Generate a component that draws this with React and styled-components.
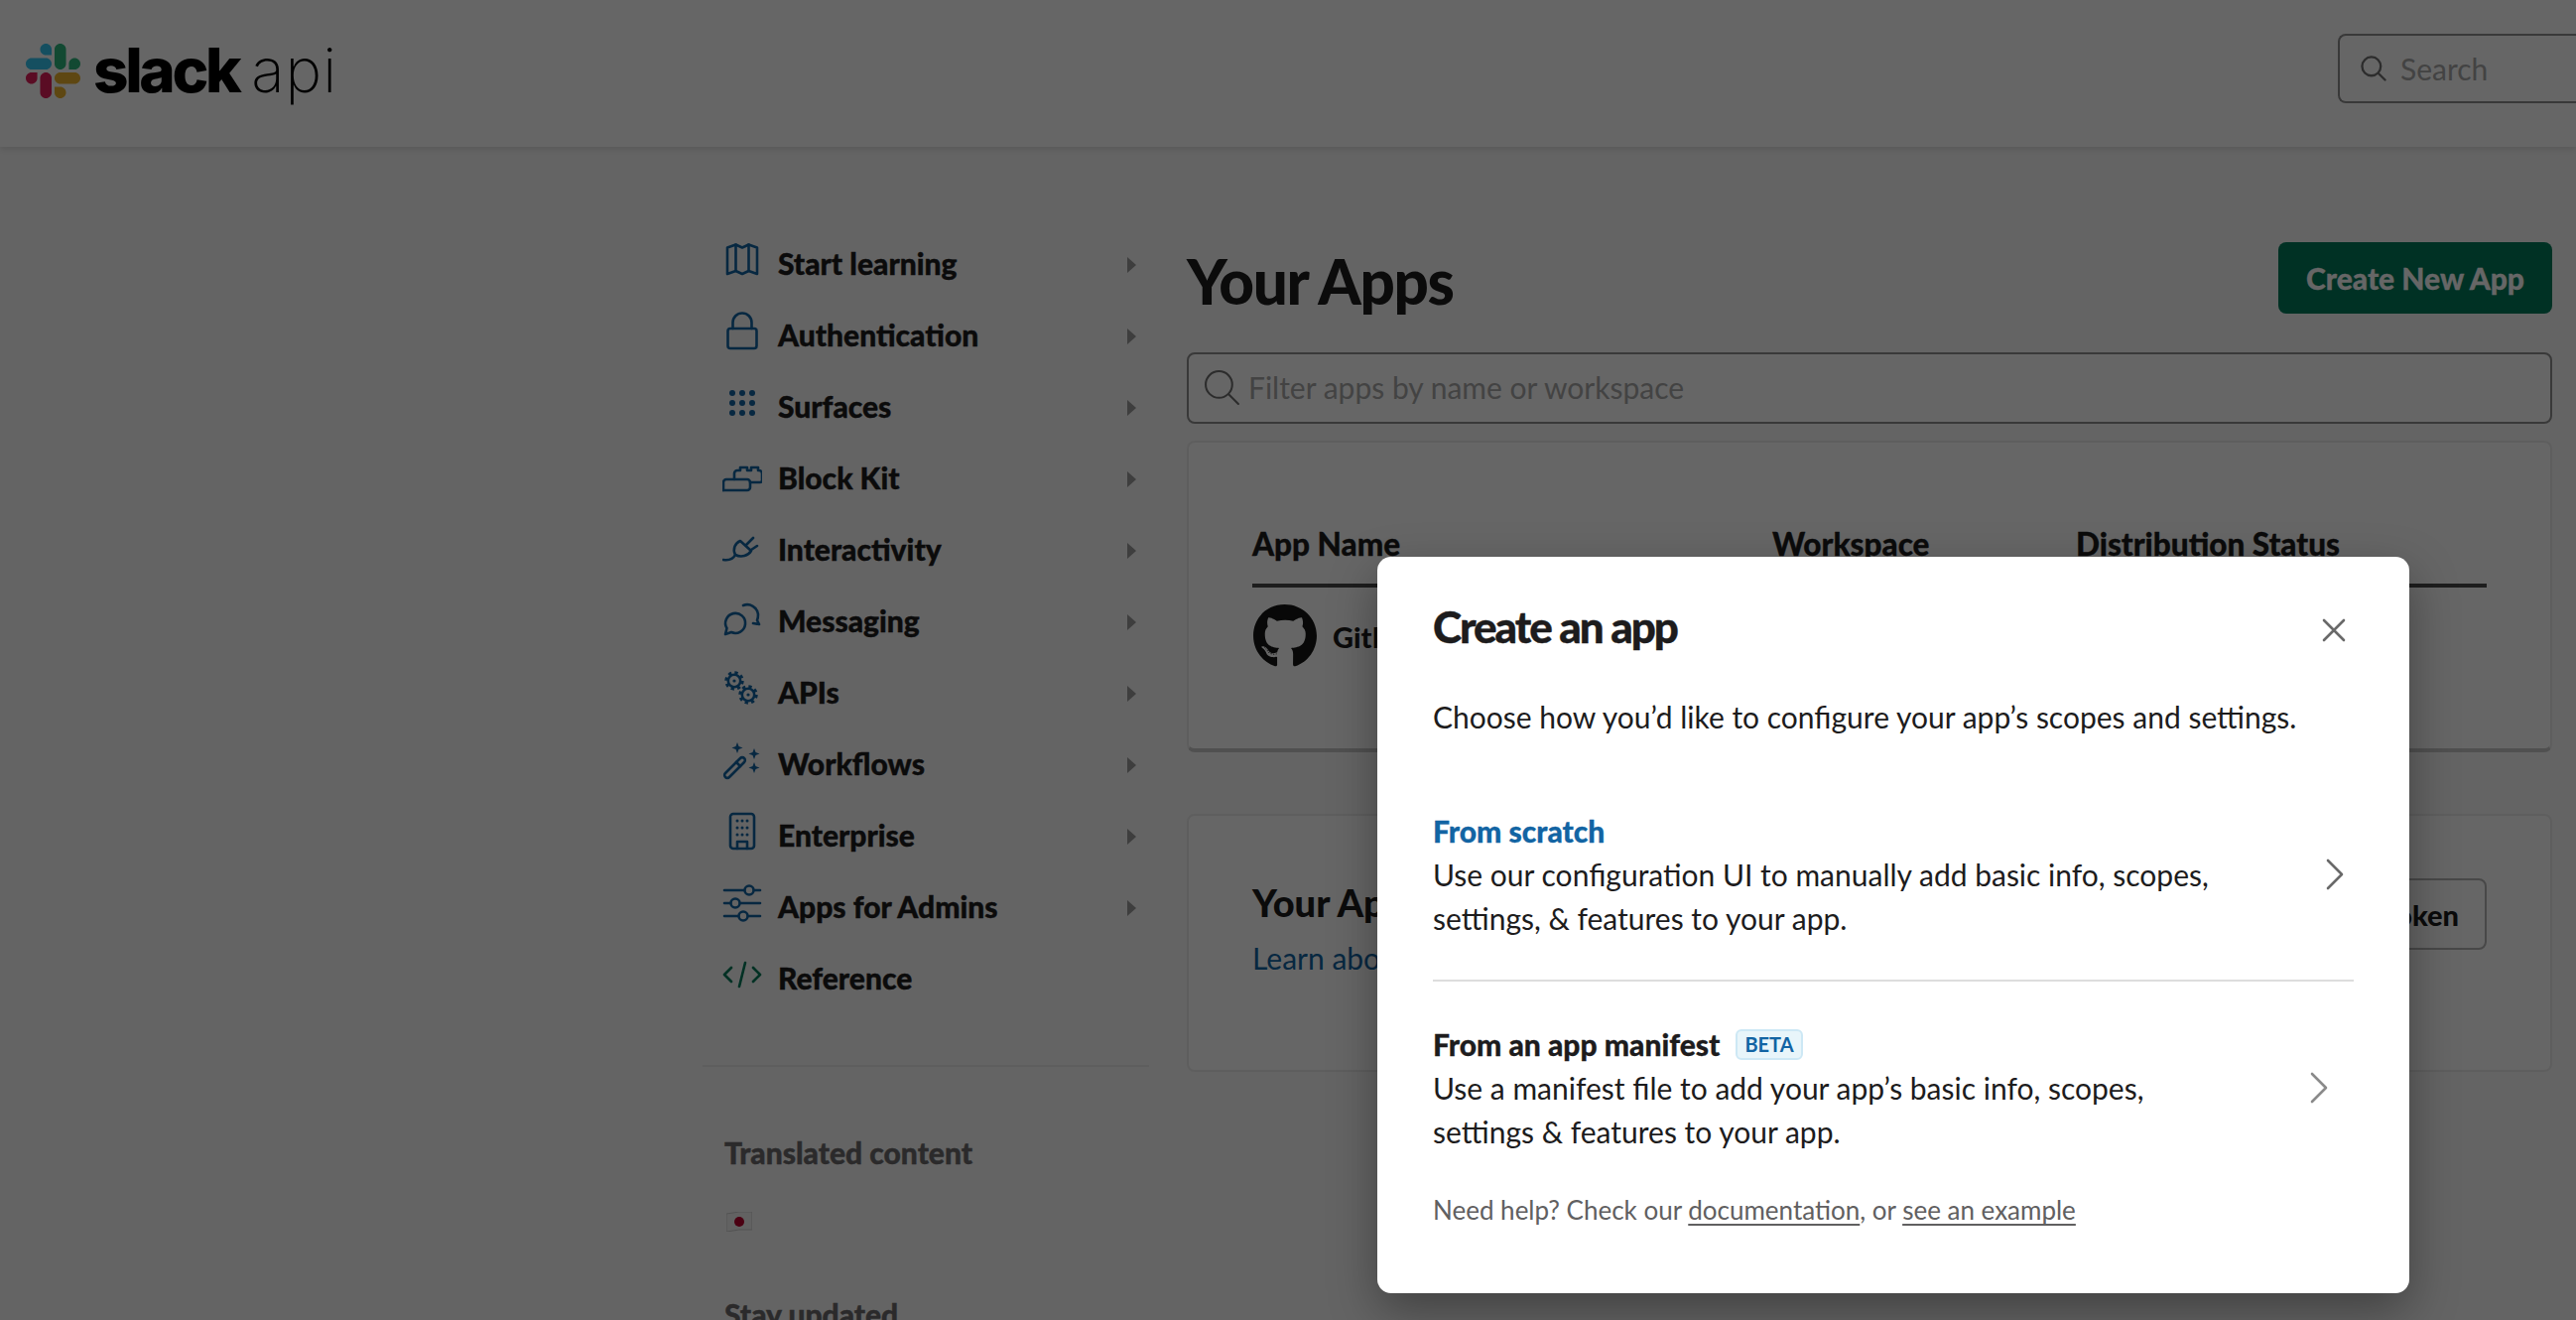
import React from 'react';
import styled, { createGlobalStyle } from 'styled-components';
import { FaGithub } from 'react-icons/fa';

const GlobalStyle = createGlobalStyle`
  html, body {
    margin: 0;
    padding: 0;
    background: #f9f9f9;
  }
  body {
    font-family: 'Lato', 'Liberation Sans', sans-serif;
    color: #1d1c1d;
    text-rendering: optimizeLegibility;
    font-variant-ligatures: common-ligatures;
  }
`;

const Page = styled.div`
  position: relative;
  width: 2596px;
  height: 1330px;
  overflow: hidden;
`;

const Header = styled.header`
  height: 148px;
  background: #fff;
  box-shadow: 0 2px 6px rgba(0, 0, 0, 0.12);
  display: flex;
  align-items: center;
  justify-content: space-between;
  padding-left: 26px;
  overflow: hidden;
`;

const Logo = styled.div`
  display: flex;
  align-items: center;
  gap: 13px;
  margin-top: -6px;
`;

const LogoWord = styled.div`
  display: flex;
  align-items: baseline;
  gap: 13px;
  color: #000;
  line-height: 1;
`;

const LogoSlack = styled.span`
  font-family: 'Inter', sans-serif;
  font-size: 62px;
  font-weight: 800;
  letter-spacing: -3.4px;
`;

const LogoApi = styled.span`
  font-family: 'Inter', sans-serif;
  font-size: 62px;
  font-weight: 200;
  letter-spacing: 1px;
`;

const HeaderSearch = styled.div`
  width: 240px;
  flex-shrink: 0;
  height: 70px;
  margin-top: -10px;
  box-sizing: border-box;
  border: 2px solid #8f8f8f;
  border-right: 0;
  border-radius: 8px 0 0 8px;
  display: flex;
  align-items: center;
  gap: 14px;
  padding-left: 21px;
  background: #fff;
  color: #a8a8a8;
  font-size: 30px;
`;

const SearchGlass = styled.svg`
  flex-shrink: 0;
  fill: none;
  stroke: ${(p) => p.$color || '#6e6e6e'};
  stroke-width: ${(p) => p.$weight || 2.6};
  stroke-linecap: round;
`;

const Body = styled.div`
  display: flex;
  margin-left: 708px;
  gap: 38px;
`;

const Sidebar = styled.aside`
  width: 450px;
  flex-shrink: 0;
  padding-top: 81px;
`;

const NavItem = styled.div`
  height: 72px;
  display: flex;
  align-items: center;
  padding: 0 13px 0 20px;
  font-size: 30px;
  font-weight: 900;
  -webkit-text-stroke: 0.4px currentColor;
  color: #1d1c1d;
`;

const NavIcon = styled.svg`
  width: 40px;
  height: 40px;
  margin-top: -6px;
  flex-shrink: 0;
  fill: none;
  stroke: ${(p) => (p.$green ? '#007a5a' : '#1264a3')};
  stroke-width: 2.6;
  stroke-linecap: round;
  stroke-linejoin: round;
`;

const NavLabel = styled.span`
  flex: 1;
  margin-left: 16px;
`;

const Caret = styled.span`
  width: 0;
  height: 0;
  margin-top: 3px;
  border-left: 9px solid #9c9c9c;
  border-top: 8px solid transparent;
  border-bottom: 8px solid transparent;
`;

const SideDivider = styled.div`
  height: 2px;
  background: #ececec;
  margin-top: 52px;
`;

const SideHeading = styled.h4`
  margin: ${(p) => p.$top}px 0 0 22px;
  font-size: 30px;
  line-height: 36px;
  font-weight: 900;
  -webkit-text-stroke: 0.4px currentColor;
  color: #6b6a6b;
`;

const Flag = styled.svg`
  display: block;
  margin: 42px 0 0 24px;
`;

const Main = styled.main`
  width: 1376px;
  flex-shrink: 0;
  padding-top: 96px;
`;

const TitleRow = styled.div`
  display: flex;
  justify-content: space-between;
  align-items: flex-start;
`;

const PageTitle = styled.h1`
  margin: -3px 0 0;
  font-size: 62px;
  line-height: 84px;
  font-weight: 900;
  letter-spacing: -1.4px;
  color: #1d1c1d;
`;

const PrimaryButton = styled.div`
  height: 72px;
  padding: 0 28px;
  display: flex;
  align-items: center;
  background: #007a5a;
  color: #fff;
  border-radius: 8px;
  font-size: 30px;
  font-weight: 900;
  -webkit-text-stroke: 0.3px currentColor;
`;

const FilterBox = styled.div`
  height: 72px;
  margin-top: 30px;
  box-sizing: border-box;
  border: 2px solid #8f8f8f;
  border-radius: 8px;
  background: #fff;
  display: flex;
  align-items: center;
  gap: 8px;
  padding: 0 0 2px 15px;
  font-size: 30px;
  color: #a8a8a8;
`;

const Card = styled.section`
  box-sizing: border-box;
  height: ${(p) => p.$height}px;
  margin-top: ${(p) => p.$top}px;
  padding: 0 64px;
  background: #fff;
  border: 2px solid #ececec;
  border-bottom: ${(p) => (p.$raised ? '4px solid #c9c9c9' : '2px solid #ececec')};
  border-radius: 8px;
`;

const TableGrid = styled.div`
  display: grid;
  grid-template-columns: 524px 306px 1fr;
`;

const TableHead = styled(TableGrid)`
  height: 146px;
  box-sizing: border-box;
  padding-top: 82px;
  border-bottom: 4px solid #4a4a4a;
  font-size: 31.5px;
  line-height: 40px;
  font-weight: 900;
  -webkit-text-stroke: 0.3px currentColor;
`;

const AppCell = styled.div`
  display: flex;
  align-items: center;
  gap: 15px;
  padding-top: 16px;
  font-size: 29px;
  font-weight: 900;
`;

const TokenRow = styled.div`
  display: flex;
  justify-content: space-between;
  align-items: flex-start;
  padding-top: 63px;
`;

const TokenTitle = styled.h2`
  margin: 0;
  font-size: 38px;
  line-height: 48px;
  font-weight: 900;
`;

const TokenLink = styled.a`
  display: block;
  margin-top: 12px;
  font-size: 30px;
  line-height: 40px;
  color: #1264a3;
`;

const OutlineButton = styled.div`
  height: 72px;
  box-sizing: border-box;
  padding: 0 26px;
  display: flex;
  align-items: center;
  border: 2px solid #b5b5b5;
  border-radius: 8px;
  font-size: 29px;
  font-weight: 900;
`;

const Overlay = styled.div`
  position: absolute;
  inset: 0;
  background: rgba(0, 0, 0, 0.6);
  padding: 561px 0 0 1388px;
`;

const Modal = styled.div`
  width: 1040px;
  height: 742px;
  box-sizing: border-box;
  padding: 0 56px;
  background: #fff;
  border-radius: 14px;
  box-shadow: 0 18px 48px rgba(0, 0, 0, 0.35);
`;

const ModalHead = styled.div`
  display: flex;
  align-items: center;
  justify-content: space-between;
  height: 139px;
`;

const ModalTitle = styled.h2`
  margin: 0;
  font-size: 44px;
  font-weight: 900;
  letter-spacing: -2px;
  -webkit-text-stroke: 0.4px currentColor;
  color: #1d1c1d;
`;

const LineIcon = styled.svg`
  display: block;
  flex-shrink: 0;
  fill: none;
  stroke: ${(p) => p.$color};
  stroke-width: 2.6;
  stroke-linecap: round;
  stroke-linejoin: round;
  margin-right: ${(p) => p.$right}px;
  margin-top: ${(p) => p.$top || 0}px;
`;

const ModalIntro = styled.p`
  margin: 0;
  font-size: 30px;
  line-height: 44px;
  color: #1d1c1d;
`;

const Option = styled.div`
  display: flex;
  align-items: center;
  justify-content: space-between;
  padding: ${(p) => p.$pad};
  border-bottom: ${(p) => (p.$ruled ? '2px solid #dddddd' : '0')};
`;

const OptionTitleRow = styled.div`
  display: flex;
  align-items: center;
  gap: 16px;
  height: 44px;
`;

const OptionTitle = styled.span`
  font-size: 30px;
  font-weight: 900;
  -webkit-text-stroke: 0.3px currentColor;
  color: ${(p) => (p.$link ? '#1264a3' : '#1d1c1d')};
`;

const Badge = styled.span`
  height: 31px;
  box-sizing: border-box;
  padding: 0 7px;
  display: flex;
  align-items: center;
  font-size: 20px;
  font-weight: 700;
  color: #1264a3;
  background: #e8f5fa;
  border: 2px solid #cde8f5;
  border-radius: 6px;
`;

const OptionText = styled.p`
  margin: 0;
  width: 800px;
  font-size: 30px;
  line-height: 44px;
  color: #1d1c1d;
`;

const HelpLine = styled.p`
  margin: 23px 0 0;
  font-size: 26px;
  line-height: 36px;
  color: #616061;

  a {
    color: #616061;
    text-decoration: underline;
    text-underline-offset: 4px;
  }
`;

const navItems = [
  { label: 'Start learning', icon: 'map' },
  { label: 'Authentication', icon: 'lock' },
  { label: 'Surfaces', icon: 'dots' },
  { label: 'Block Kit', icon: 'blocks' },
  { label: 'Interactivity', icon: 'plug' },
  { label: 'Messaging', icon: 'chat' },
  { label: 'APIs', icon: 'gears' },
  { label: 'Workflows', icon: 'wand' },
  { label: 'Enterprise', icon: 'building' },
  { label: 'Apps for Admins', icon: 'sliders' },
  { label: 'Reference', icon: 'code', leaf: true },
];

const Gear = ({ cx, cy }) => (
  <g>
    <circle cx={cx} cy={cy} r="6.2" />
    <circle cx={cx} cy={cy} r="8" strokeWidth="3.4" strokeDasharray="3.2 3.1" strokeLinecap="butt" />
    <circle cx={cx} cy={cy} r="1.6" fill="#1264a3" stroke="none" />
  </g>
);

const iconShapes = {
  map: (
    <>
      <path d="M5 7.5 13.5 4.5l6.5 3 6.500-3 8.500 3V34l-8.500-3-6.500 3-6.500-3L5 34z" />
      <path d="M13.5 4.5V31M26.500 4.500V31" />
    </>
  ),
  lock: (
    <>
      <rect x="5.5" y="17" width="29" height="20" rx="2.5" />
      <path d="M10.5 17v-6a9.5 9.5 0 0 1 19 0v6" />
    </>
  ),
  dots: (
    <g fill="#1264a3" stroke="none">
      {[8, 18, 28].flatMap((y) =>
        [10, 20, 30].map((x) => <circle key={`${x}-${y}`} cx={x} cy={y + 2} r="3" />)
      )}
    </g>
  ),
  blocks: (
    <>
      <path d="M1 36V28a3 3 0 0 1 3-3h8v-6a3 3 0 0 1 3-3h3v-3h7v3h4v-3h7v3h1a3 3 0 0 1 3 3v7a2 2 0 0 1-2 2H28" />
      <path d="M1 36h24a3 3 0 0 0 3-3v-5a3 3 0 0 0-3-3H12" />
    </>
  ),
  plug: (
    <>
      <path d="M1 34c7 1 10-1 12-5" />
      <path d="M13 29c-3-6 0-12 5-14l11 10c-3 5-10 7-16 4z" />
      <path d="M24 19l7-7M29 24l6-4" />
    </>
  ),
  chat: (
    <>
      <path d="M3 37l1.5-6a10 10 0 1 1 4.5 4z" />
      <path d="M21 8a11 11 0 0 1 15 9c0 4-1 6-1 6l2 4-6-1" />
    </>
  ),
  gears: (
    <>
      <Gear cx={12} cy={12} />
      <Gear cx={26} cy={26} />
    </>
  ),
  wand: (
    <>
      <path d="M3 33 18 18a2.8 2.8 0 0 1 4 4L7 37a2.8 2.8 0 0 1-4-4z" />
      <path d="M14 22l4 4" />
      <g fill="#1264a3" stroke="none">
        <path d="M15 2l1.5 4 4 1.5-4 1.5-1.5 4-1.5-4-4-1.5 4-1.5z" />
        <path d="M32 8l1.5 4 4 1.5-4 1.5-1.5 4-1.5-4-4-1.5 4-1.5z" />
        <path d="M32 22l1.5 4 4 1.5-4 1.5-1.5 4-1.5-4-4-1.5 4-1.5z" />
      </g>
    </>
  ),
  building: (
    <>
      <rect x="8" y="2" width="24" height="35" rx="3" />
      <path d="M15 37v-7h10v7" />
      <g fill="#1264a3" stroke="none">
        {[9, 16, 23].flatMap((y) =>
          [15, 20, 25].map((x) => <circle key={`${x}-${y}`} cx={x} cy={y} r="1.5" />)
        )}
      </g>
    </>
  ),
  sliders: (
    <>
      <path d="M2 7h20M32 7h6M2 20h6M18 20h20M2 33h14M26 33h12" />
      <circle cx="27" cy="7" r="4.5" />
      <circle cx="13" cy="20" r="4.5" />
      <circle cx="21" cy="33" r="4.5" />
    </>
  ),
  code: <path d="M9 13l-7 7 7 7M31 13l7 7-7 7M23 8l-6 24" />,
};

const Glass = ({ size, color, weight }) => (
  <SearchGlass width={size} height={size} viewBox="0 0 36 36" $color={color} $weight={weight}>
    <circle cx="15" cy="15" r="13" />
    <path d="M24.5 24.5 34 34" />
  </SearchGlass>
);

const SlackMark = () => (
  <svg width="55" height="55" viewBox="0 0 122.8 122.8">
    <path d="M25.8 77.6c0 7.1-5.8 12.9-12.9 12.9S0 84.7 0 77.6s5.8-12.9 12.9-12.9h12.9v12.9zm6.5 0c0-7.1 5.8-12.9 12.9-12.9s12.9 5.8 12.9 12.9v32.3c0 7.1-5.8 12.9-12.9 12.9s-12.9-5.8-12.9-12.9V77.6z" fill="#e01e5a" />
    <path d="M45.2 25.8c-7.1 0-12.9-5.8-12.9-12.9S38.1 0 45.2 0s12.9 5.8 12.9 12.9v12.9H45.2zm0 6.5c7.1 0 12.9 5.8 12.9 12.9s-5.8 12.9-12.9 12.9H12.9C5.8 58.1 0 52.3 0 45.2s5.8-12.9 12.9-12.9h32.3z" fill="#36c5f0" />
    <path d="M97 45.2c0-7.1 5.8-12.9 12.9-12.9s12.9 5.8 12.9 12.9-5.8 12.9-12.9 12.9H97V45.2zm-6.5 0c0 7.1-5.8 12.9-12.9 12.9s-12.9-5.8-12.9-12.9V12.9C64.7 5.8 70.5 0 77.6 0s12.9 5.8 12.9 12.9v32.3z" fill="#2eb67d" />
    <path d="M77.6 97c7.1 0 12.9 5.8 12.9 12.9s-5.8 12.9-12.9 12.9-12.9-5.8-12.9-12.9V97h12.9zm0-6.5c-7.1 0-12.9-5.8-12.9-12.9s5.8-12.9 12.9-12.9h32.3c7.1 0 12.9 5.8 12.9 12.9s-5.8 12.9-12.9 12.9H77.6z" fill="#ecb22e" />
  </svg>
);

const App = () => (
  <Page>
    <GlobalStyle />
    <Header>
      <Logo>
        <SlackMark />
        <LogoWord>
          <LogoSlack>slack</LogoSlack>
          <LogoApi>api</LogoApi>
        </LogoWord>
      </Logo>
      <HeaderSearch>
        <Glass size={26} color="#6e6e6e" weight={3.2} />
        Search
      </HeaderSearch>
    </Header>
    <Body>
      <Sidebar>
        {navItems.map((item) => (
          <NavItem key={item.label}>
            <NavIcon viewBox="0 0 40 40" $green={item.leaf}>
              {iconShapes[item.icon]}
            </NavIcon>
            <NavLabel>{item.label}</NavLabel>
            {!item.leaf && <Caret />}
          </NavItem>
        ))}
        <SideDivider />
        <SideHeading $top={68}>Translated content</SideHeading>
        <Flag width="26" height="20" viewBox="0 0 26 20">
          <path d="M0 2q13-3 26-2v18q-13-1-26 2z" fill="#f5f5f5" stroke="#cfcfcf" />
          <circle cx="13" cy="10" r="5" fill="#bc002d" />
        </Flag>
        <SideHeading $top={65}>Stay updated</SideHeading>
      </Sidebar>
      <Main>
        <TitleRow>
          <PageTitle>Your Apps</PageTitle>
          <PrimaryButton>Create New App</PrimaryButton>
        </TitleRow>
        <FilterBox>
          <Glass size={37} color="#6e6e6e" weight={2} />
          Filter apps by name or workspace
        </FilterBox>
        <Card $top={17} $height={314} $raised>
          <TableHead>
            <span>App Name</span>
            <span>Workspace</span>
            <span>Distribution Status</span>
          </TableHead>
          <TableGrid>
            <AppCell>
              <FaGithub size={66} color="#161614" />
              GitHub
            </AppCell>
          </TableGrid>
        </Card>
        <Card $top={62} $height={260}>
          <TokenRow>
            <div>
              <TokenTitle>Your App Configuration Tokens</TokenTitle>
              <TokenLink>Learn about tokens</TokenLink>
            </div>
            <OutlineButton>Generate Token</OutlineButton>
          </TokenRow>
        </Card>
      </Main>
    </Body>
    <Overlay>
      <Modal>
        <ModalHead>
          <ModalTitle>Create an app</ModalTitle>
          <LineIcon width="24" height="24" viewBox="0 0 24 24" $color="#696969" $right={8} $top={8}>
            <path d="M2 2l20 20M22 2 2 22" />
          </LineIcon>
        </ModalHead>
        <ModalIntro>Choose how you’d like to configure your app’s scopes and settings.</ModalIntro>
        <Option $pad="71px 0 40px" $ruled>
          <div>
            <OptionTitleRow>
              <OptionTitle $link>From scratch</OptionTitle>
            </OptionTitleRow>
            <OptionText>Use our configuration UI to manually add basic info, scopes, settings, &amp; features to your app.</OptionText>
          </div>
          <LineIcon width="18" height="32" viewBox="0 0 18 32" $color="#696969" $right={10}>
            <path d="M2 2l14 14L2 30" />
          </LineIcon>
        </Option>
        <Option $pad="41px 0 16px">
          <div>
            <OptionTitleRow>
              <OptionTitle>From an app manifest</OptionTitle>
              <Badge>BETA</Badge>
            </OptionTitleRow>
            <OptionText>Use a manifest file to add your app’s basic info, scopes, settings &amp; features to your app.</OptionText>
          </div>
          <LineIcon width="18" height="32" viewBox="0 0 18 32" $color="#8a8a8a" $right={26}>
            <path d="M2 2l14 14L2 30" />
          </LineIcon>
        </Option>
        <HelpLine>
          Need help? Check our <a>documentation</a>, or <a>see an example</a>
        </HelpLine>
      </Modal>
    </Overlay>
  </Page>
);

export default App;
